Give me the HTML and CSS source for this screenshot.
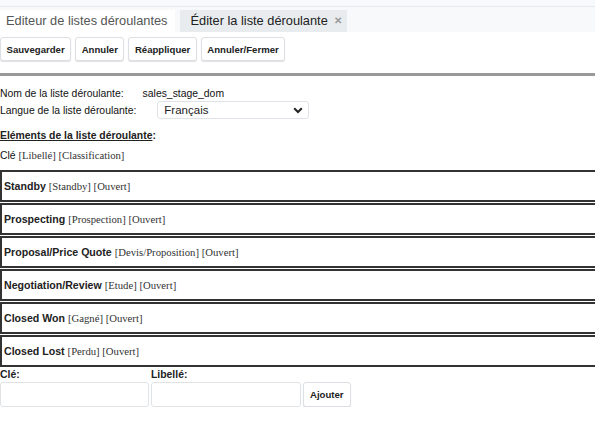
FILE: index.html
```html
<!DOCTYPE html>
<html>
<head>
<meta charset="utf-8">
<link rel="stylesheet" href="styles.css">
</head>
<body>
<div class="header">
  <div class="strip"></div>
  <div class="tabs">
    <div class="tab active">Editeur de listes déroulantes</div>
    <div class="tab">Éditer la liste déroulante<span class="close">✕</span></div>
  </div>
</div>
<div class="toolbar">
  <button class="btn">Sauvegarder</button>
  <button class="btn">Annuler</button>
  <button class="btn">Réappliquer</button>
  <button class="btn">Annuler/Fermer</button>
</div>
<div class="rule"></div>
<div class="info">
  <div class="row-name"><span class="lbl">Nom de la liste déroulante:</span><span class="val">sales_stage_dom</span></div>
  <div class="row-lang"><span class="lbl">Langue de la liste déroulante:</span>
    <div class="select"><span>Français</span>
      <svg class="chev" width="10" height="7" viewBox="0 0 10 7"><path d="M1.2 1.3 L5 5 L8.8 1.3" fill="none" stroke="#222" stroke-width="2"/></svg>
    </div>
  </div>
  <div class="section-title"><span class="u">Eléments de la liste déroulante</span>:</div>
  <div class="legend"><span class="key">Clé</span> <span class="serif">[Libellé] [Classification]</span></div>
</div>
<ul class="items">
  <li class="item"><b>Standby</b> <span class="serif">[Standby] [Ouvert]</span></li>
  <li class="item"><b>Prospecting</b> <span class="serif">[Prospection] [Ouvert]</span></li>
  <li class="item"><b>Proposal/Price Quote</b> <span class="serif">[Devis/Proposition] [Ouvert]</span></li>
  <li class="item"><b>Negotiation/Review</b> <span class="serif">[Etude] [Ouvert]</span></li>
  <li class="item"><b>Closed Won</b> <span class="serif">[Gagné] [Ouvert]</span></li>
  <li class="item"><b>Closed Lost</b> <span class="serif">[Perdu] [Ouvert]</span></li>
</ul>
<div class="addform">
  <label class="flbl">Clé:</label>
  <label class="flbl">Libellé:</label>
  <span></span>
  <input class="field" type="text">
  <input class="field" type="text">
  <button class="btn add">Ajouter</button>
</div>
</body>
</html>
```

FILE: styles.css
```css
html, body {
  margin: 0;
  padding: 0;
  background: #fff;
  overflow: hidden;
}
body {
  font-family: "Liberation Sans", Arial, sans-serif;
  color: #222;
  width: 595px;
}
.header {
  background: #f8f9fa;
  height: 32px;
}
.strip {
  height: 6px;
  border-bottom: 1px solid #e7e9ec;
}
.tabs {
  display: flex;
  gap: 5px;
  margin-top: 3px;
}
.tab {
  height: 22px;
  line-height: 22px;
  font-size: 12.8px;
  color: #222;
  background: #e9ecef;
  padding: 0 5px 0 10px;
  display: flex;
  align-items: center;
}
.tab.active {
  background: #fff;
  color: #555;
  padding: 0 8px 0 6px;
}
.close {
  color: #999;
  font-size: 10px;
  font-weight: bold;
  margin-left: 6px;
}
.toolbar {
  display: flex;
  gap: 4px;
  padding-top: 5px;
}
.btn {
  font-family: "Liberation Sans", Arial, sans-serif;
  font-weight: bold;
  font-size: 9.6px;
  color: #222;
  background: #fff;
  border: 1px solid #dcdfe3;
  border-radius: 3px;
  box-shadow: 0 1px 1px rgba(0,0,0,0.12);
  height: 24px;
  padding: 0 5.5px;
  margin: 0;
}
.rule {
  height: 3px;
  background: #999;
  margin-top: 12px;
}
.info {
  padding-top: 11px;
  font-size: 10.4px;
  color: #111;
}
.row-name {
  line-height: 14px;
}
.row-name .val {
  margin-left: 19px;
}
.row-lang {
  display: flex;
  align-items: center;
  height: 20px;
  margin-top: -1px;
}
.select {
  margin-left: 21px;
  height: 18px;
  border: 1px solid #dfe2e6;
  border-radius: 3px;
  display: flex;
  align-items: center;
  justify-content: space-between;
  padding: 0 5px 0 6px;
  box-sizing: border-box;
  width: 152px;
  font-size: 11.5px;
  color: #222;
}
.chev {
  margin-top: 1px;
}
.section-title {
  margin-top: 9px;
  line-height: 14px;
  font-weight: bold;
  color: #222;
}
.u {
  text-decoration: underline;
}
.legend {
  margin-top: 5px;
  line-height: 14px;
}
.serif {
  font-family: "Liberation Serif", "Times New Roman", serif;
  font-size: 10.7px;
  color: #333;
}
.items {
  list-style: none;
  margin: 7px -10px 0 0;
  padding: 0;
}
.item {
  border: 2px solid #333;
  height: 28px;
  line-height: 28px;
  margin-bottom: 1px;
  padding-left: 2px;
  font-size: 10.6px;
  color: #222;
}
.addform {
  display: grid;
  grid-template-columns: 149px 150px auto;
  column-gap: 2px;
  justify-content: start;
}
.flbl {
  font-weight: bold;
  font-size: 10.4px;
  line-height: 14px;
  color: #222;
}
.field {
  height: 25px;
  box-sizing: border-box;
  border: 1px solid #dfe3e6;
  border-radius: 3px;
  margin: 0;
  padding: 0;
}
.btn.add {
  height: 25px;
  padding: 0 6px;
}
```
